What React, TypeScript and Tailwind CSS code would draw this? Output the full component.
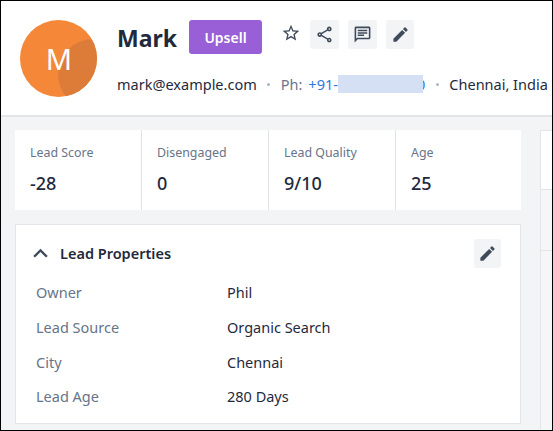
import { MdEdit, MdExpandLess, MdOutlineChat, MdOutlineShare, MdStarBorder } from 'react-icons/md';

const STATS = [
  { label: 'Lead Score', value: '-28' },
  { label: 'Disengaged', value: '0' },
  { label: 'Lead Quality', value: '9/10' },
  { label: 'Age', value: '25' },
];

const PROPS = [
  { label: 'Owner', value: 'Phil' },
  { label: 'Lead Source', value: 'Organic Search' },
  { label: 'City', value: 'Chennai' },
  { label: 'Lead Age', value: '280 Days' },
];

function Dot() {
  return <span className="mx-[10.5px] h-[3px] w-[3px] shrink-0 rounded-full bg-[#a9b6c6]" />;
}

export default function App() {
  return (
    <div className="flex h-[431px] w-[553px] flex-col overflow-hidden border border-black bg-[#f3f4f6] font-['Noto_Sans',sans-serif] text-[#1f2a3c]">
      <header className="flex h-[116px] shrink-0 items-start border-b-2 border-[#e3e5e9] bg-white pl-[19px] pt-[19px]">
        <div className="relative h-[77px] w-[77px] shrink-0 overflow-hidden rounded-full bg-[#f58738]">
          <div className="absolute left-[38px] top-[19px] h-[70px] w-[70px] rounded-full bg-[#dd7c38]" />
          <span className="absolute inset-0 flex items-center justify-center pl-[1px] text-[29px] text-white">M</span>
        </div>
        <div className="ml-[20px] flex flex-col">
          <div className="flex items-start">
            <h1 className="mt-[1px] w-[72px] text-[23px] font-bold leading-[34px]">Mark</h1>
            <button className="h-[34px] w-[73px] rounded-[3px] bg-[#995fd6] text-[14px] font-semibold text-white">Upsell</button>
            <MdStarBorder className="ml-[19px] mt-[3px] text-[20px] text-[#3f4a5a]" />
            <div className="ml-[9px] flex gap-[9px]">
              <span className="flex h-[29px] w-[29px] items-center justify-center rounded-[3px] bg-[#f3f4f6] text-[#3f4a5a]"><MdOutlineShare className="text-[19px]" /></span>
              <span className="flex h-[29px] w-[29px] items-center justify-center rounded-[3px] bg-[#f3f4f6] text-[#3f4a5a]"><MdOutlineChat className="text-[19px]" /></span>
              <span className="flex h-[29px] w-[28px] items-center justify-center rounded-[3px] bg-[#f3f4f6] text-[#3f4a5a]"><MdEdit className="text-[19px]" /></span>
            </div>
          </div>
          <div className="mt-[20px] flex items-center whitespace-nowrap text-[14.5px] leading-[18px]">
            <span>mark@example.com</span>
            <Dot />
            <span className="text-[#6b7688]">Ph:</span>
            <span className="relative ml-[6px] w-[117px] text-[#2b77e6]">
              +91-<span className="ml-[79px] inline-block">0</span>
              <span className="absolute bottom-0 left-[30px] top-0 w-[85px] bg-[#d5e0f5]" />
            </span>
            <Dot />
            <span>Chennai, India</span>
          </div>
        </div>
      </header>

      <div className="flex flex-1 gap-[19px] pl-[14px] pt-[13px]">
        <main className="flex w-[506px] shrink-0 flex-col gap-[14px]">
          <section className="grid h-[80px] grid-cols-[127px_127px_127px_125px] bg-white">
            {STATS.map((s, i) => (
              <div key={s.label} className={`pl-[15px] pt-[14px] ${i < 3 ? 'border-r border-[#dfe2e6]' : ''}`}>
                <div className="text-[12.4px] leading-[18px] text-[#677489]">{s.label}</div>
                <div className="mt-[9px] text-[18px] font-medium leading-[24px]">{s.value}</div>
              </div>
            ))}
          </section>

          <section className="h-[200px] border border-[#e2e5ea] bg-white">
            <div className="flex h-[51px] items-start pl-[10px] pr-[19px] pt-[14px]">
              <MdExpandLess className="text-[29px] text-[#3f4a5a]" />
              <h2 className="ml-[5px] flex-1 text-[14.5px] font-semibold leading-[29px]">Lead Properties</h2>
              <span className="flex h-[29px] w-[27px] items-center justify-center rounded-[3px] bg-[#f3f4f6] text-[#3f4a5a]"><MdEdit className="text-[19px]" /></span>
            </div>
            <dl className="pl-[20px]">
              {PROPS.map((p) => (
                <div key={p.label} className="flex h-[34.6px] items-center text-[14.5px]">
                  <dt className="w-[191px] text-[#677489]">{p.label}</dt>
                  <dd>{p.value}</dd>
                </div>
              ))}
            </dl>
          </section>
        </main>

        <aside className="flex-1 border-l border-t border-[#e2e5ea] bg-[#f5f6f8]">
          <div className="h-[59px] border-b border-[#e2e5ea] bg-white" />
          <div className="h-[61px] border-b border-[#e2e5ea]" />
        </aside>
      </div>
    </div>
  );
}
